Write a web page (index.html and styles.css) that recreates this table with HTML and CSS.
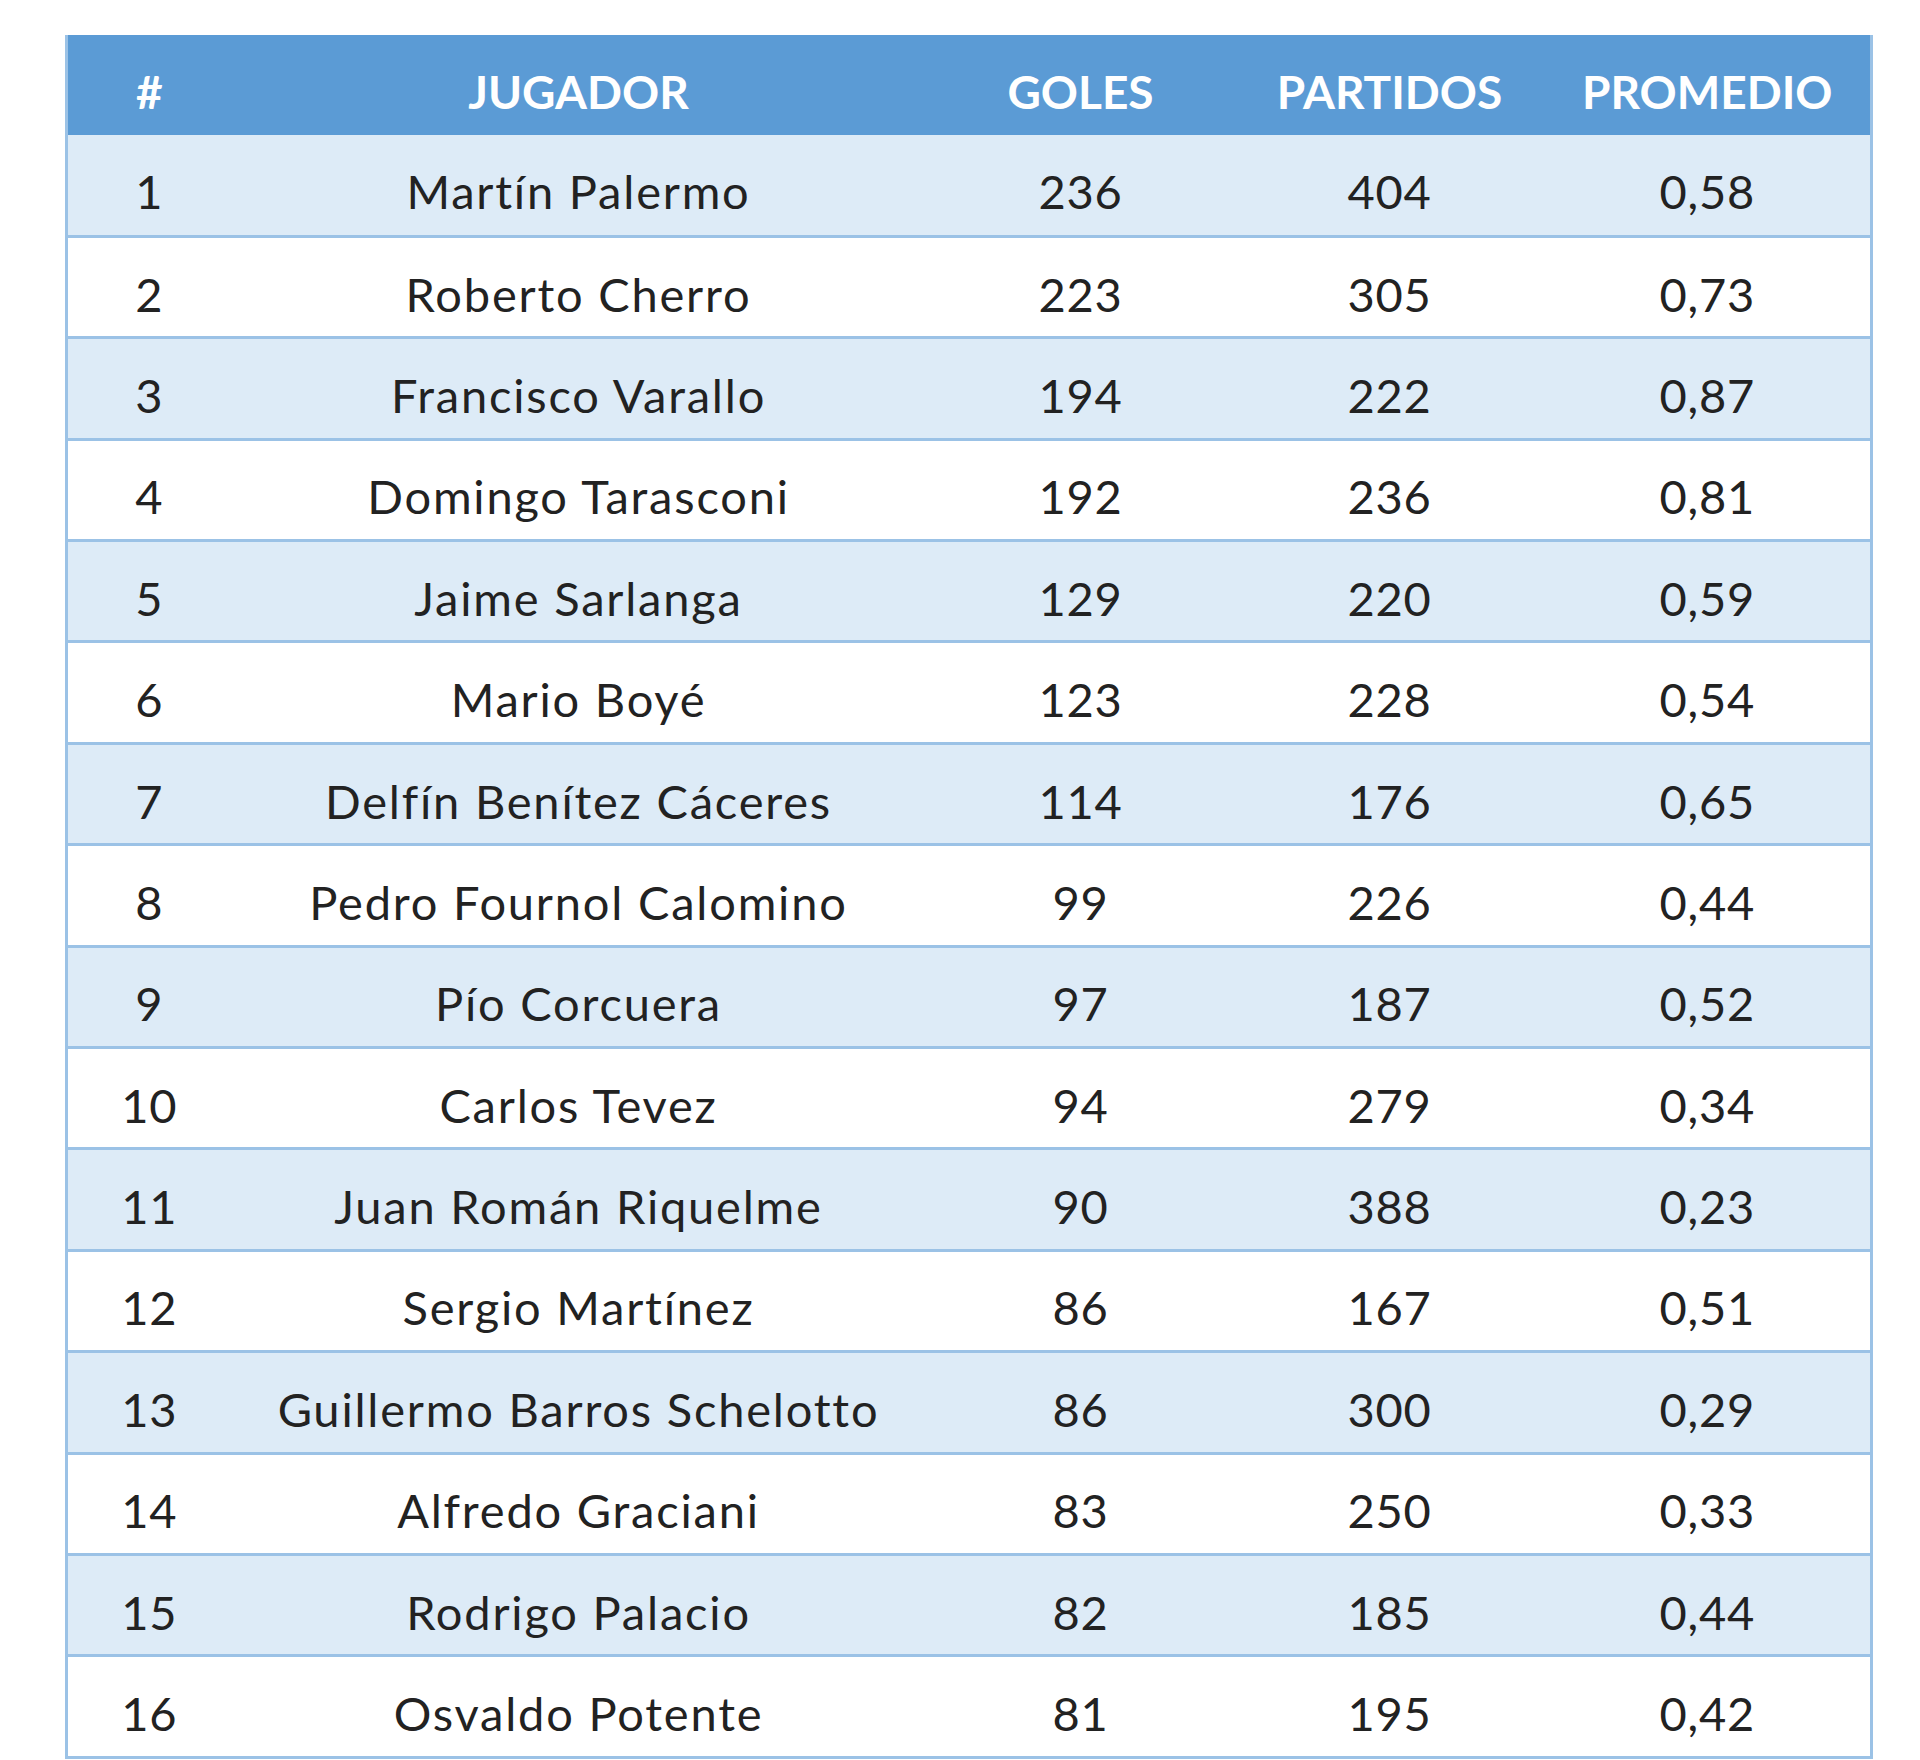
FILE: index.html
```html
<!DOCTYPE html>
<html lang="es">
<head>
<meta charset="utf-8">
<title>Goleadores</title>
<link rel="stylesheet" href="styles.css">
</head>
<body>
<div class="page">
<table class="scorers">
<colgroup>
<col class="c-rank"><col class="c-name"><col class="c-goals"><col class="c-games"><col class="c-avg">
</colgroup>
<thead>
<tr><th>#</th><th>JUGADOR</th><th>GOLES</th><th>PARTIDOS</th><th>PROMEDIO</th></tr>
</thead>
<tbody>
<tr><td>1</td><td class="name">Martín Palermo</td><td>236</td><td>404</td><td>0,58</td></tr>
<tr><td>2</td><td class="name">Roberto Cherro</td><td>223</td><td>305</td><td>0,73</td></tr>
<tr><td>3</td><td class="name">Francisco Varallo</td><td>194</td><td>222</td><td>0,87</td></tr>
<tr><td>4</td><td class="name">Domingo Tarasconi</td><td>192</td><td>236</td><td>0,81</td></tr>
<tr><td>5</td><td class="name">Jaime Sarlanga</td><td>129</td><td>220</td><td>0,59</td></tr>
<tr><td>6</td><td class="name">Mario Boyé</td><td>123</td><td>228</td><td>0,54</td></tr>
<tr><td>7</td><td class="name">Delfín Benítez Cáceres</td><td>114</td><td>176</td><td>0,65</td></tr>
<tr><td>8</td><td class="name">Pedro Fournol Calomino</td><td>99</td><td>226</td><td>0,44</td></tr>
<tr><td>9</td><td class="name">Pío Corcuera</td><td>97</td><td>187</td><td>0,52</td></tr>
<tr><td>10</td><td class="name">Carlos Tevez</td><td>94</td><td>279</td><td>0,34</td></tr>
<tr><td>11</td><td class="name">Juan Román Riquelme</td><td>90</td><td>388</td><td>0,23</td></tr>
<tr><td>12</td><td class="name">Sergio Martínez</td><td>86</td><td>167</td><td>0,51</td></tr>
<tr><td>13</td><td class="name">Guillermo Barros Schelotto</td><td>86</td><td>300</td><td>0,29</td></tr>
<tr><td>14</td><td class="name">Alfredo Graciani</td><td>83</td><td>250</td><td>0,33</td></tr>
<tr><td>15</td><td class="name">Rodrigo Palacio</td><td>82</td><td>185</td><td>0,44</td></tr>
<tr><td>16</td><td class="name">Osvaldo Potente</td><td>81</td><td>195</td><td>0,42</td></tr>
</tbody>
</table>
</div>
</body>
</html>
```
FILE: styles.css
```css
html, body {
  margin: 0;
  padding: 0;
  background: #ffffff;
}

.page {
  padding: 35px 0 0 65px;
}

.scorers {
  width: 1805px;
  table-layout: fixed;
  border-collapse: collapse;
  font-family: Lato, "Liberation Sans", sans-serif;
  color: #222222;
  border-left: 3px solid #9bc2e6;
  border-right: 3px solid #9bc2e6;
}

.c-rank { width: 164px; }
.c-name { width: 696px; }
.c-goals { width: 308px; }
.c-games { width: 310px; }
.c-avg { width: 327px; }

.scorers th,
.scorers td {
  text-align: center;
  vertical-align: middle;
  white-space: nowrap;
}

.scorers thead tr {
  height: 100px;
  background: #5b9bd5;
}

.scorers th {
  color: #ffffff;
  font-weight: 700;
  font-size: 46px;
  padding: 13px 0 0 0;
}

.scorers tbody tr {
  height: 101.4px;
  border-bottom: 3px solid #9bc2e6;
}

.scorers tbody tr:nth-child(odd) {
  background: #ddebf7;
}

.scorers td {
  font-size: 47px;
  font-weight: 400;
  letter-spacing: 0.8px;
  padding: 13px 0 0 0;
}

.scorers td.name {
  letter-spacing: 1.8px;
}
```
